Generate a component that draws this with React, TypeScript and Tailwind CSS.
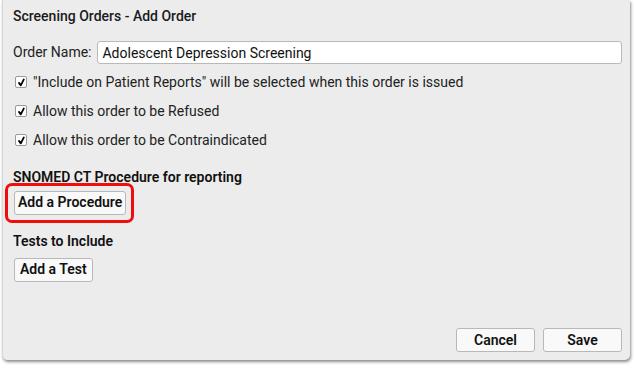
export default function App() {
  const checks = [
    '"Include on Patient Reports" will be selected when this order is issued',
    'Allow this order to be Refused',
    'Allow this order to be Contraindicated',
  ]

  return (
    <div className="w-[634px] h-[369px] bg-white" style={{ fontFamily: 'Roboto, "Liberation Sans", sans-serif' }}>
      <div className="ml-[2px] w-[628px] h-[360px] bg-[#ececec] border-l border-[#d6d6d6] rounded-b-[5px] shadow-[1px_2px_3px_rgba(0,0,0,0.45)] flex flex-col pl-[10px] pr-[8px] pb-[8px]">
        {/* Title */}
        <div className="pt-[2px] h-[30px] flex items-center text-[14px] font-medium text-[#1a1a1a]">
          Screening Orders - Add Order
        </div>

        {/* Order name */}
        <div className="mt-[11px] flex items-center gap-[6px] text-[14px] text-[#222]">
          <span>Order Name:</span>
          <input
            readOnly
            value="Adolescent Depression Screening"
            className="flex-1 h-[23px] bg-white border border-[#b9b9b9] rounded-[3px] px-[4px] text-[14px] text-[#111] outline-none"
          />
        </div>

        {/* Checkboxes */}
        <div className="mt-[8px] flex flex-col gap-[9px]">
          {checks.map((c) => (
            <div key={c} className="flex items-center gap-[6px] h-[20px] text-[14px] text-[#222]">
              <span className="ml-[2px] w-[12px] h-[12px] bg-white border border-[#9a9a9a] rounded-[2px] flex items-center justify-center">
                <svg width="9" height="9" viewBox="0 0 10 10">
                  <path d="M2.2 5.4 L4.2 8.2 L7.6 1.6" fill="none" stroke="#000" strokeWidth="2" strokeLinecap="round" strokeLinejoin="round" />
                </svg>
              </span>
              <span>{c}</span>
            </div>
          ))}
        </div>

        {/* Procedure */}
        <div className="mt-[17px] text-[14px] font-semibold text-[#111]">SNOMED CT Procedure for reporting</div>
        <div className="-mt-[5px] -ml-[8px] self-start border-[3px] border-[#f20d0d] rounded-[7px] pl-[6px] pr-[5px] pt-[4px] pb-[5px]">
          <button className="h-[24px] px-[3px] bg-[#f9f9f9] border border-[#b8b8b8] rounded-[3px] text-[14px] font-semibold text-[#111]">
            Add a Procedure
          </button>
        </div>

        {/* Tests */}
        <div className="mt-[8px] text-[14px] font-semibold text-[#111]">Tests to Include</div>
        <button className="mt-[6px] ml-[1px] self-start h-[24px] px-[5px] bg-[#f9f9f9] border border-[#b8b8b8] rounded-[3px] text-[14px] font-semibold text-[#111]">
          Add a Test
        </button>

        {/* Footer */}
        <div className="mt-auto flex justify-end gap-[8px]">
          <button className="w-[79px] h-[24px] bg-[#f9f9f9] border border-[#b8b8b8] rounded-[3px] text-[14px] font-semibold text-[#111]">
            Cancel
          </button>
          <button className="w-[79px] h-[24px] bg-[#f9f9f9] border border-[#b8b8b8] rounded-[3px] text-[14px] font-semibold text-[#111]">
            Save
          </button>
        </div>
      </div>
    </div>
  )
}
